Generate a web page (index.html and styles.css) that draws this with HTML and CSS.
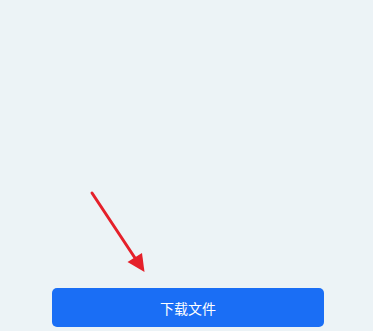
FILE: index.html
```html
<!DOCTYPE html>
<html lang="zh-CN">
<head>
    <meta charset="UTF-8">
    <meta name="viewport" content="width=device-width, initial-scale=1.0">
    <title>下载文件</title>
    <link rel="stylesheet" href="styles.css">
</head>
<body>
    <div class="page">
        <svg class="hint-arrow" width="373" height="331" viewBox="0 0 373 331">
            <line x1="92" y1="193" x2="135" y2="258" stroke="#e5202a" stroke-width="3" stroke-linecap="round"/>
            <polygon points="144.5,272 127.5,262 142,253" fill="#e5202a"/>
        </svg>
        <button class="download-btn">下载文件</button>
    </div>
</body>
</html>
```

FILE: styles.css
```css
html, body {
    margin: 0;
    padding: 0;
}

body {
    background-color: #ecf3f6;
    font-family: "Noto Sans CJK SC", "Noto Sans", sans-serif;
}

.page {
    position: relative;
    height: 331px;
    display: flex;
    flex-direction: column;
    justify-content: flex-end;
    padding: 0 49px 4px 52px;
    box-sizing: border-box;
}

.hint-arrow {
    position: absolute;
    left: 0;
    top: 0;
    pointer-events: none;
}

.download-btn {
    height: 39px;
    width: 100%;
    border: none;
    border-radius: 5px;
    background: #1a6ef5;
    color: #ffffff;
    font-family: inherit;
    font-size: 14px;
    cursor: pointer;
}
```
